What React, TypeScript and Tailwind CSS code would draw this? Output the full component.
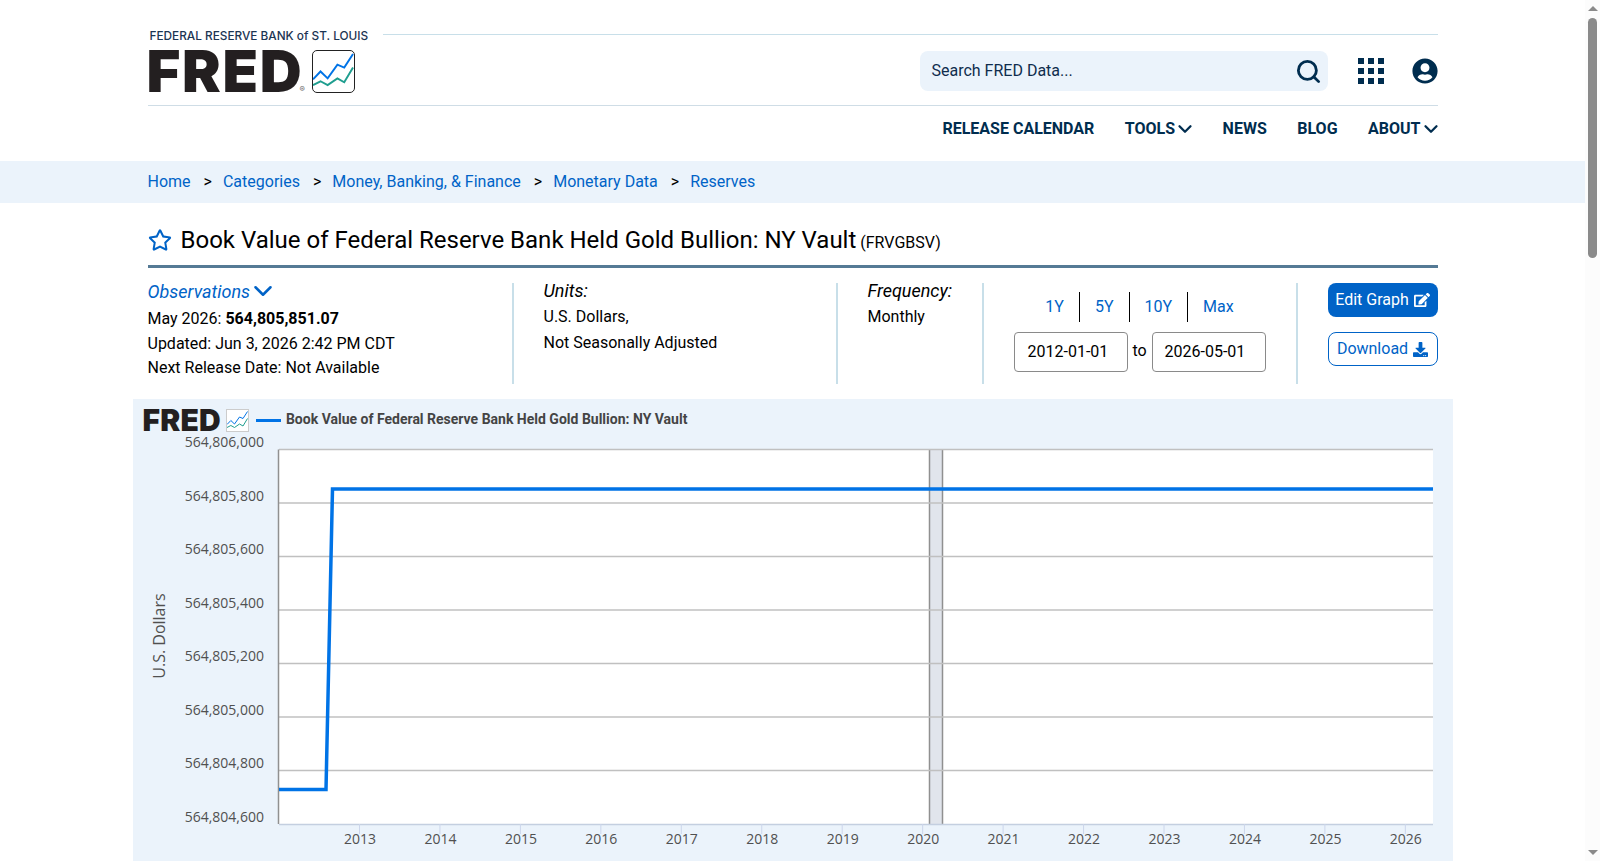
import { ChevronDown, Search } from "lucide-react";
import { FaDownload, FaEdit, FaRegStar, FaUserCircle } from "react-icons/fa";

const crumbs = ["Home", "Categories", "Money, Banking, & Finance", "Monetary Data", "Reserves"];
const navItems = [
  { label: "RELEASE CALENDAR" },
  { label: "TOOLS", menu: true },
  { label: "NEWS" },
  { label: "BLOG" },
  { label: "ABOUT", menu: true },
];
const yLabels = ["564,806,000", "564,805,800", "564,805,600", "564,805,400", "564,805,200", "564,805,000", "564,804,800", "564,804,600"];
const years = [2013, 2014, 2015, 2016, 2017, 2018, 2019, 2020, 2021, 2022, 2023, 2024, 2025, 2026];

function LogoMark({ className }: { className: string }) {
  return (
    <svg viewBox="0 0 42 42" className={className}>
      <polyline points="0,29 7.7,21 15,28 25,14 32,17 41,3" fill="none" stroke="#0073e6" strokeWidth="2" />
      <polyline points="0,35 7.7,31 15,35 25,28 32,32 41,17" fill="none" stroke="#1f9e8f" strokeWidth="2" />
    </svg>
  );
}

function Chart() {
  const top = 449.5;
  const step = 53.5;
  return (
    <svg viewBox="133 431 1320 440" className="block w-[1320px] h-[440px]">
      <rect x="279" y={top} width="1154" height={step * 7} fill="#ffffff" />
      <rect x="929.5" y={top} width="13" height={step * 7} fill="#e1e5ec" />
      <line x1="929.5" x2="929.5" y1={top} y2={top + step * 7} stroke="#909090" strokeWidth="1.5" />
      <line x1="942.5" x2="942.5" y1={top} y2={top + step * 7} stroke="#909090" strokeWidth="1.5" />
      {yLabels.map((label, i) => (
        <g key={label}>
          {i < 7 && <line x1="279" x2="1433" y1={top + step * i} y2={top + step * i} stroke="#c0c0c0" strokeWidth="1.5" />}
          <text x="264" y={top + step * i - 2.5} textAnchor="end" fontFamily="Open Sans" fontSize="14" fill="#505050">{label}</text>
        </g>
      ))}
      <line x1="278.5" x2="278.5" y1={top} y2={top + step * 7} stroke="#909090" strokeWidth="1.5" />
      <line x1="279" x2="1433" y1={top + step * 7 + 0.5} y2={top + step * 7 + 0.5} stroke="#c4cfe0" strokeWidth="1.5" />
      {years.map((year, i) => {
        const x = 359.5 + i * 80.45;
        return (
          <g key={year}>
            <line x1={x} x2={x} y1={top + step * 7} y2={top + step * 7 + 10} stroke="#ccd6eb" />
            <text x={x + 0.5} y="844" textAnchor="middle" fontFamily="Open Sans" fontSize="14" fill="#505050">{year}</text>
          </g>
        );
      })}
      <polyline points="279,789.5 326,789.5 332.5,489 1433,489" fill="none" stroke="#0073e6" strokeWidth="3.5" />
      <text transform="translate(165 636) rotate(-90)" textAnchor="middle" fontFamily="Open Sans" fontSize="16" fill="#505050">U.S. Dollars</text>
    </svg>
  );
}

export default function App() {
  return (
    <div className="flex h-screen overflow-hidden bg-white text-black font-['Roboto',sans-serif] text-base">
      <main className="w-[1585px] shrink-0">
        <div className="mx-auto w-[1320px] px-[15px]">
          <header className="flex h-[106px] border-b border-[#cfdde6]">
            <div className="w-[235px] shrink-0 pt-[29px]">
              <div className="font-['Inter',sans-serif] text-[11.8px] leading-[14px] font-medium text-[#1c3553] pl-[2px] whitespace-nowrap">FEDERAL RESERVE BANK of ST. LOUIS</div>
              <div className="flex items-center mt-[6px] -ml-[1px]">
                <span className="relative font-['Inter',sans-serif] font-black text-[58px] leading-[44px] tracking-[1.7px] text-[#231f20]">
                  FRED
                  <span className="absolute left-[153px] bottom-[0px] text-[8px] leading-[8px] font-normal tracking-normal text-[#666]">®</span>
                </span>
                <span className="ml-[9px] w-[43px] h-[43px] rounded-[5px] border border-[#222] overflow-hidden">
                  <LogoMark className="w-full h-full" />
                </span>
              </div>
            </div>
            <div className="flex-1 pt-[34px]">
              <div className="border-t border-[#c8dfe9] flex items-center justify-end pt-[16px]">
                <div className="w-[408px] h-[40px] rounded-[8px] bg-[#ebf3fb] flex items-center justify-between pl-[12px] pr-[6px] text-[#0f2d4d]">
                  <span>Search FRED Data...</span>
                  <Search size={27} strokeWidth={2.5} className="text-[#002d4f]" />
                </div>
                <div className="ml-[30px] grid grid-cols-3 gap-[4px]">
                  {Array.from({ length: 9 }).map((_, i) => (
                    <span key={i} className="w-[6px] h-[6px] bg-[#002d4f]" />
                  ))}
                </div>
                <FaUserCircle size={26} className="ml-[28px] text-[#002d4f]" />
              </div>
            </div>
          </header>
          <nav className="h-[55px] flex items-center justify-end gap-[30.5px] pb-[9px]">
            {navItems.map((item) => (
              <span key={item.label} className="flex items-center font-bold text-[#002d4f]">
                {item.label}
                {item.menu && <ChevronDown size={22} strokeWidth={2.5} className="-ml-[1px] -mr-[4px]" />}
              </span>
            ))}
          </nav>
        </div>
        <div className="h-[42px] bg-[#ebf3fb]">
          <div className="mx-auto w-[1320px] px-[15px] h-full flex items-center gap-[13px]">
            {crumbs.map((crumb, i) => (
              <div key={crumb} className="flex items-center">
                {i > 0 && <span className="mr-[11px]">&gt;</span>}
                <span className="text-[#0063c7]">{crumb}</span>
              </div>
            ))}
          </div>
        </div>
        <div className="mx-auto w-[1320px] px-[15px]">
          <div className="flex items-center h-[65px] pt-[12px] border-b-[3px] border-[#557a95] mb-[15px]">
            <FaRegStar size={24} className="text-[#0063c7]" />
            <h1 className="ml-[9px] text-[24px] leading-[30px]">Book Value of Federal Reserve Bank Held Gold Bullion: NY Vault</h1>
            <span className="ml-[4px] mt-[5px]">(FRVGBSV)</span>
          </div>
          <div className="flex h-[101px]">
            <div className="w-[366px] border-r-2 border-[#c8dfe9]">
              <div className="flex items-center h-[18px] -mt-[1px] italic text-[18px] text-[#0063c7]">
                Observations <ChevronDown size={30} strokeWidth={2} className="-ml-[2px]" />
              </div>
              <div className="mt-[7px] leading-[24.5px]">
                <div>May 2026: <b>564,805,851.07</b></div>
                <div>Updated: Jun 3, 2026 2:42 PM CDT</div>
                <div>Next Release Date: Not Available</div>
              </div>
            </div>
            <div className="w-[324px] pl-[30px] border-r-2 border-[#c8dfe9]">
              <div className="italic text-[18px] leading-[18px] -mt-[1px]">Units:</div>
              <div className="mt-[4px] leading-[25.5px]">U.S. Dollars,<br />Not Seasonally Adjusted</div>
            </div>
            <div className="w-[146px] pl-[30px] border-r-2 border-[#c8dfe9]">
              <div className="italic text-[18px] leading-[18px] -mt-[1px]">Frequency:</div>
              <div className="mt-[4px] leading-[25.5px]">Monthly</div>
            </div>
            <div className="w-[314px] border-r-2 border-[#c8dfe9] flex flex-col items-center pt-[9px]">
              <div className="flex text-[#0063c7]">
                <span className="h-[30px] px-[15px] flex items-center border-r border-black">1Y</span>
                <span className="h-[30px] px-[15px] flex items-center border-r border-black">5Y</span>
                <span className="h-[30px] px-[15px] flex items-center border-r border-black">10Y</span>
                <span className="h-[30px] px-[15px] flex items-center">Max</span>
              </div>
              <div className="flex items-center mt-[10px]">
                <span className="w-[114px] h-[40px] rounded-[4px] border border-[#8a8a8a] pl-[13px] flex items-center">2012-01-01</span>
                <span className="w-[24px] text-center pb-[2px]">to</span>
                <span className="w-[114px] h-[40px] rounded-[4px] border border-[#8a8a8a] pl-[12px] flex items-center">2026-05-01</span>
              </div>
            </div>
            <div className="flex-1 flex flex-col items-end">
              <div className="w-[110px] h-[34px] rounded-[8px] bg-[#0063c7] text-white flex items-center justify-center gap-[5px]">
                Edit Graph <FaEdit size={16} />
              </div>
              <div className="w-[110px] h-[34px] mt-[15px] rounded-[8px] border border-[#0063c7] text-[#0063c7] flex items-center justify-center gap-[5px]">
                Download <FaDownload size={15} />
              </div>
            </div>
          </div>
        </div>
        <section className="mx-auto mt-[15px] w-[1320px] bg-[#ebf3fb] pt-[10px]">
          <div className="flex items-center h-[22px] pl-[10px]">
            <span className="font-['Inter',sans-serif] font-black text-[30px] leading-[22px] tracking-[0.2px] text-[#231f20]">FRED</span>
            <span className="ml-[5px] w-[23px] h-[23px] bg-white border border-[#ccc]">
              <LogoMark className="w-full h-full" />
            </span>
            <span className="ml-[7px] w-[25px] h-[3px] bg-[#0073e6]" />
            <span className="ml-[5px] pb-[1px] font-bold text-[14px] text-[#444444]">Book Value of Federal Reserve Bank Held Gold Bullion: NY Vault</span>
          </div>
          <Chart />
        </section>
      </main>
      <aside className="w-[15px] shrink-0 bg-[#fcfcfc] flex flex-col items-center pt-[6px]">
        <span className="w-0 h-0 border-x-[5px] border-x-transparent border-b-[5px] border-b-[#8a8a8a]" />
        <span className="w-[9px] h-[240px] mt-[7px] rounded-full bg-[#8a8a8a]" />
        <span className="w-0 h-0 mt-auto mb-[6px] border-x-[5px] border-x-transparent border-t-[5px] border-t-[#8a8a8a]" />
      </aside>
    </div>
  );
}
